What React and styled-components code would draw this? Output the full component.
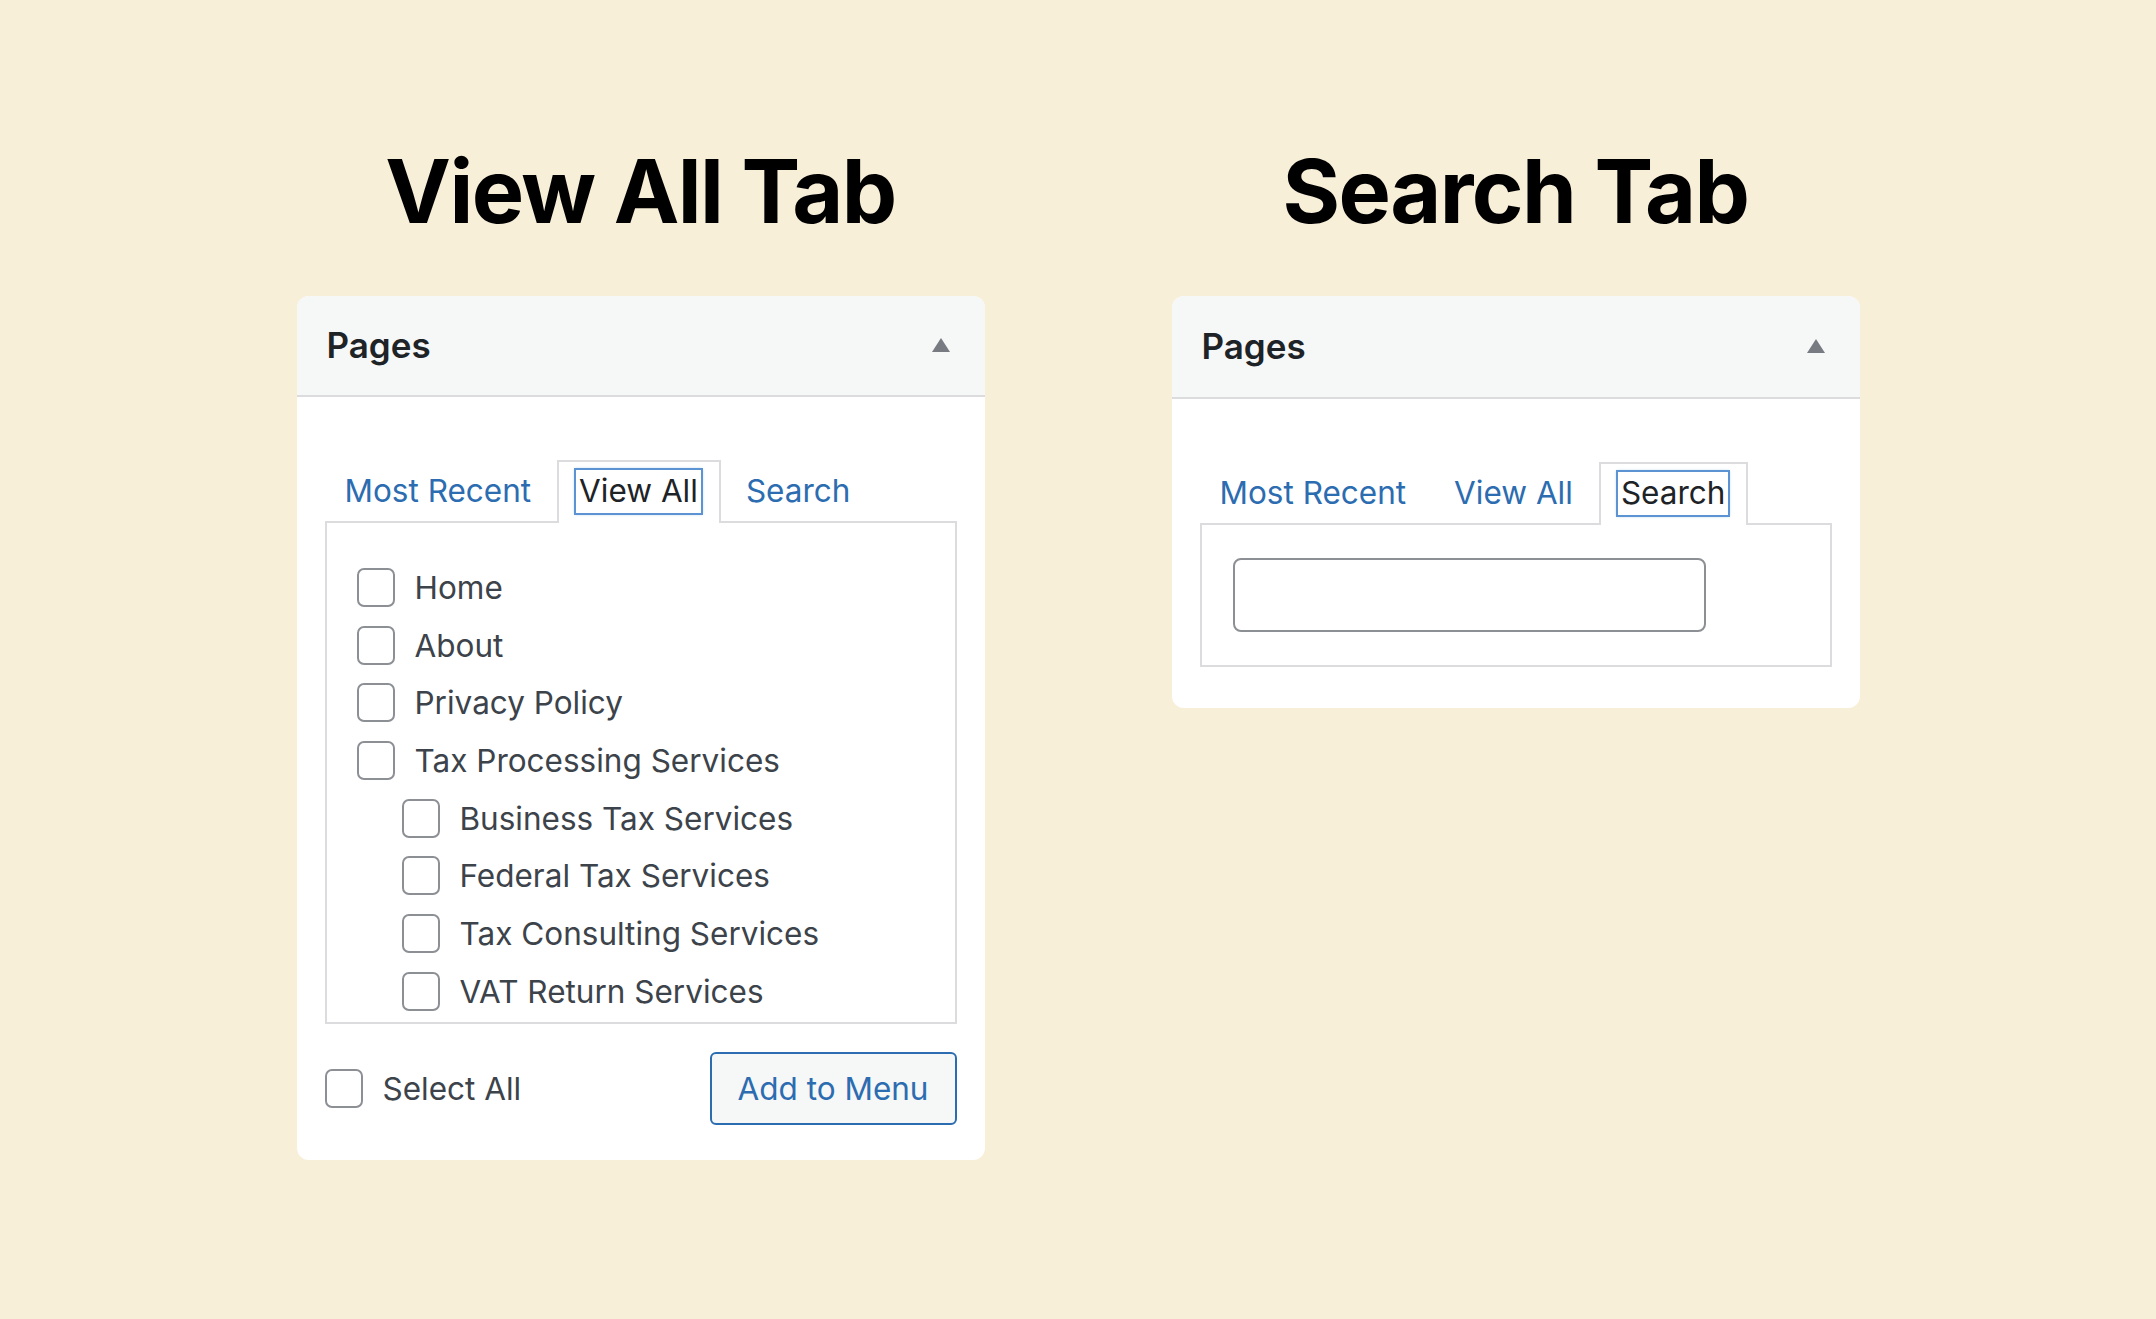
import React from "react";
import styled, { createGlobalStyle } from "styled-components";

const GlobalStyle = createGlobalStyle`
  html, body {
    margin: 0;
    padding: 0;
    background: #f8efd9;
  }
  body {
    font-family: "Inter", "Noto Sans", "Liberation Sans", sans-serif;
    -webkit-font-smoothing: antialiased;
  }
  * { box-sizing: border-box; }
`;

const Page = styled.main`
  display: grid;
  grid-template-columns: repeat(2, 688px);
  column-gap: 187px;
  justify-content: center;
  align-items: start;
  padding-top: 139px;
  min-height: 100vh;
`;

const Column = styled.div`
  display: flex;
  flex-direction: column;
`;

const Title = styled.h1`
  margin: 0 0 51px;
  font-family: "Inter", "Liberation Sans", sans-serif;
  font-weight: 700;
  font-size: 88px;
  line-height: 1.2;
  letter-spacing: -1.6px;
  text-align: center;
  color: #000;
`;

const Panel = styled.section`
  background: #fff;
  border-radius: 12px;
  overflow: hidden;
`;

const PanelHeader = styled.header`
  height: ${(p) => p.$h}px;
  display: flex;
  align-items: center;
  justify-content: space-between;
  padding: 0 34px 0 30px;
  background: #f6f7f7;
  border-bottom: 2px solid #dcdcde;
`;

const HeaderTitle = styled.h2`
  margin: 0;
  font-size: 35px;
  font-weight: 600;
  color: #1d2327;
`;

const ToggleIcon = styled.svg`
  width: 20px;
  height: 16px;
  display: block;
`;

const PanelBody = styled.div`
  padding: 63px 28px ${(p) => p.$pb}px;
`;

const TabList = styled.ul`
  list-style: none;
  margin: 0 0 -2px;
  padding: 0;
  display: flex;
  gap: 3px;
  position: relative;
  z-index: 1;
`;

const Tab = styled.li`
  padding: 8px 18px 10px 17px;
  border: 2px solid ${(p) => (p.$active ? "#dcdcde" : "transparent")};
  border-bottom: 0;
  background: ${(p) => (p.$active ? "#fff" : "transparent")};
  &:first-child { padding-left: 15px; }
`;

const TabLink = styled.a`
  display: block;
  padding: 0 3px;
  height: 43px;
  line-height: 42px;
  font-size: 31.5px;
  font-weight: 400;
  color: ${(p) => (p.$active ? "#1d2327" : "#2c6cb0")};
  text-decoration: none;
  outline: ${(p) => (p.$active ? "2px solid #5b93d3" : "none")};
  box-shadow: ${(p) => (p.$active ? "0 0 3px 1px rgba(79,148,212,0.6)" : "none")};
`;

const Box = styled.div`
  border: 2px solid #dcdcde;
  background: #fff;
  padding: ${(p) => p.$pad};
`;

const List = styled.ul`
  list-style: none;
  margin: 0;
  padding: 0;
`;

const Row = styled.li`
  display: flex;
  align-items: center;
  gap: 20px;
  height: 57.7px;
  padding-left: ${(p) => (p.$child ? 45 : 0)}px;
  font-size: 31.5px;
  color: #3c434a;
`;

const Checkbox = styled.span`
  flex: none;
  width: 38px;
  height: 39px;
  border: 2px solid #8c8f94;
  border-radius: 7px;
  background: #fff;
`;

const Footer = styled.div`
  display: flex;
  align-items: center;
  justify-content: space-between;
  margin-top: 28px;
`;

const SelectAll = styled.label`
  display: flex;
  align-items: center;
  gap: 20px;
  font-size: 31.5px;
  color: #3c434a;
`;

const AddButton = styled.button`
  height: 73px;
  padding: 0 26px;
  border: 2px solid #2c6cb0;
  border-radius: 6px;
  background: #f6f7f7;
  color: #2c6cb0;
  font-family: inherit;
  font-size: 31.5px;
`;

const SearchInput = styled.div`
  width: 473px;
  height: 74px;
  border: 2px solid #8c8f94;
  border-radius: 8px;
  background: #fff;
`;

const Toggle = () => (
  <ToggleIcon viewBox="0 0 20 16">
    <polygon points="10,1 19,15 1,15" fill="#787c82" />
  </ToggleIcon>
);

const Tabs = ({ active }) => (
  <TabList>
    {["Most Recent", "View All", "Search"].map((t) => (
      <Tab key={t} $active={t === active}>
        <TabLink $active={t === active}>{t}</TabLink>
      </Tab>
    ))}
  </TabList>
);

const pages = [
  { name: "Home" },
  { name: "About" },
  { name: "Privacy Policy" },
  { name: "Tax Processing Services" },
  { name: "Business Tax Services", child: true },
  { name: "Federal Tax Services", child: true },
  { name: "Tax Consulting Services", child: true },
  { name: "VAT Return Services", child: true },
];

export default function App() {
  return (
    <>
      <GlobalStyle />
      <Page>
        <Column>
          <Title>View All Tab</Title>
          <Panel>
            <PanelHeader $h={101}>
              <HeaderTitle>Pages</HeaderTitle>
              <Toggle />
            </PanelHeader>
            <PanelBody $pb={35}>
              <Tabs active="View All" />
              <Box $pad="36px 30px 2px">
                <List>
                  {pages.map((p) => (
                    <Row key={p.name} $child={p.child}>
                      <Checkbox />
                      {p.name}
                    </Row>
                  ))}
                </List>
              </Box>
              <Footer>
                <SelectAll>
                  <Checkbox />
                  Select All
                </SelectAll>
                <AddButton>Add to Menu</AddButton>
              </Footer>
            </PanelBody>
          </Panel>
        </Column>
        <Column>
          <Title>Search Tab</Title>
          <Panel>
            <PanelHeader $h={103}>
              <HeaderTitle>Pages</HeaderTitle>
              <Toggle />
            </PanelHeader>
            <PanelBody $pb={41}>
              <Tabs active="Search" />
              <Box $pad="33px 31px 33px">
                <SearchInput />
              </Box>
            </PanelBody>
          </Panel>
        </Column>
      </Page>
    </>
  );
}
